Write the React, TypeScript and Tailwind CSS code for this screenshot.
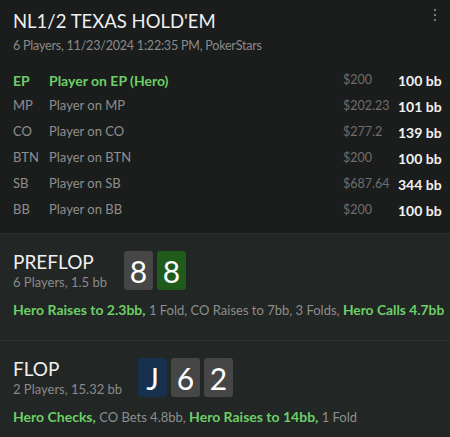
import React from "react";

const players = [
  { pos: "EP", name: "Player on EP (Hero)", amt: "$200", bb: "100 bb", hero: true },
  { pos: "MP", name: "Player on MP", amt: "$202.23", bb: "101 bb" },
  { pos: "CO", name: "Player on CO", amt: "$277.2", bb: "139 bb" },
  { pos: "BTN", name: "Player on BTN", amt: "$200", bb: "100 bb" },
  { pos: "SB", name: "Player on SB", amt: "$687.64", bb: "344 bb" },
  { pos: "BB", name: "Player on BB", amt: "$200", bb: "100 bb" },
];

function Card({ v, color }: { v: string; color: string }) {
  return (
    <div
      className={`w-[29px] h-[39px] rounded-[3px] flex items-center justify-center text-[30px] leading-none text-white ${color}`}
    >
      {v}
    </div>
  );
}

export default function App() {
  return (
    <div
      className="w-[450px] h-[437px] bg-[#1b1d1c] text-[#e8e8e8] overflow-hidden"
      style={{ fontFamily: 'Lato, "Noto Sans", sans-serif' }}
    >
      <div className="relative pl-[13px] pr-[9px] pt-[9px] pb-[10px]">
        <div className="text-[18.5px] leading-[24px] text-[#efefef]">NL1/2 TEXAS HOLD'EM</div>
        <div className="text-[12.5px] tracking-[-0.2px] leading-[18px] mt-[4px] text-[#8a8a8a]">
          6 Players, 11/23/2024 1:22:35 PM, PokerStars
        </div>
        <div className="absolute right-[14px] top-[9px] flex flex-col gap-[3px]">
          <div className="w-[2px] h-[2px] rounded-full bg-[#9a9a9a]" />
          <div className="w-[2px] h-[2px] rounded-full bg-[#9a9a9a]" />
          <div className="w-[2px] h-[2px] rounded-full bg-[#9a9a9a]" />
        </div>
        <div className="mt-[12px] flex flex-col">
          {players.map((p) => (
            <div key={p.pos} className="flex items-center h-[26px] whitespace-nowrap">
              <div
                className={`w-[36px] ${p.hero ? "text-[14px] text-[#6ccf67] font-bold" : "text-[13px] text-[#8e8e8e]"}`}
              >
                {p.pos}
              </div>
              <div
                className={`flex-1 ${p.hero ? "text-[14px] text-[#6ccf67] font-bold" : "text-[13px] text-[#8e8e8e]"}`}
              >
                {p.name}
              </div>
              <div className="w-[55px] text-[12.5px] text-[#6e6e6e]">{p.amt}</div>
              <div className="w-[43px] text-right text-[14px] font-bold text-[#f2f2f2]">{p.bb}</div>
            </div>
          ))}
        </div>
      </div>
      <div className="border-t border-[#2c302e] bg-[#222625] px-[13px] pt-[17px] h-[107px]">
        <div className="flex items-start">
          <div className="w-[111px]">
            <div className="text-[19px] leading-[22px] text-[#efefef]">PREFLOP</div>
            <div className="text-[13px] leading-[18px] text-[#8a8a8a]">6 Players, 1.5 bb</div>
          </div>
          <div className="flex gap-[4px]">
            <Card v="8" color="bg-[#464646]" />
            <Card v="8" color="bg-[#1e5b1c]" />
          </div>
        </div>
        <div className="mt-[9px] text-[13px] leading-[20px] text-[#8e8e8e] whitespace-nowrap">
          <span className="text-[14px] font-bold text-[#6ccf67]">Hero Raises to 2.3bb,</span> 1 Fold, CO
          Raises to 7bb, 3 Folds, <span className="text-[13.8px] font-bold text-[#6ccf67]">Hero Calls 4.7bb</span>
        </div>
      </div>
      <div className="border-t border-[#2c302e] bg-[#222625] px-[13px] pt-[17px] h-[97px]">
        <div className="flex items-start">
          <div className="w-[125px]">
            <div className="text-[19px] leading-[22px] text-[#efefef]">FLOP</div>
            <div className="text-[13px] leading-[18px] text-[#8a8a8a]">2 Players, 15.32 bb</div>
          </div>
          <div className="flex gap-[4px]">
            <Card v="J" color="bg-[#16304e]" />
            <Card v="6" color="bg-[#464646]" />
            <Card v="2" color="bg-[#464646]" />
          </div>
        </div>
        <div className="mt-[9px] text-[13px] leading-[20px] text-[#8e8e8e] whitespace-nowrap">
          <span className="text-[14px] font-bold text-[#6ccf67]">Hero Checks,</span> CO Bets 4.8bb,{" "}
          <span className="text-[14px] font-bold text-[#6ccf67]">Hero Raises to 14bb,</span> 1 Fold
        </div>
      </div>
    </div>
  );
}
